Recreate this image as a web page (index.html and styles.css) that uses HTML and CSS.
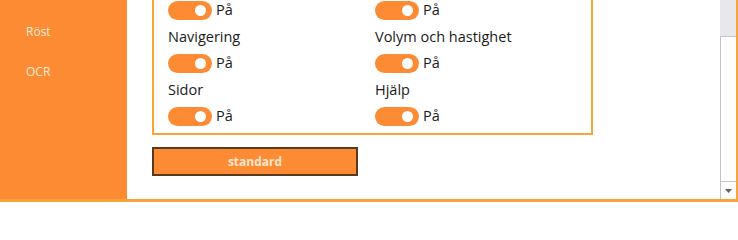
FILE: index.html
```html
<!DOCTYPE html>
<html lang="sv">
<head>
<meta charset="utf-8">
<link rel="stylesheet" href="styles.css">
</head>
<body>
<div class="app">
  <nav class="sidebar">
    <div class="nav-item">Röst</div>
    <div class="nav-item">OCR</div>
  </nav>
  <main class="main">
    <div class="viewport">
      <div class="scroller">
        <section class="box">
          <div class="item">
            <div class="toggle-row"><span class="toggle"><span class="knob"></span></span><span class="state">På</span></div>
          </div>
          <div class="item">
            <div class="toggle-row"><span class="toggle"><span class="knob"></span></span><span class="state">På</span></div>
          </div>
          <div class="item">
            <div class="label">Navigering</div>
            <div class="toggle-row"><span class="toggle"><span class="knob"></span></span><span class="state">På</span></div>
          </div>
          <div class="item">
            <div class="label">Volym och hastighet</div>
            <div class="toggle-row"><span class="toggle"><span class="knob"></span></span><span class="state">På</span></div>
          </div>
          <div class="item">
            <div class="label">Sidor</div>
            <div class="toggle-row"><span class="toggle"><span class="knob"></span></span><span class="state">På</span></div>
          </div>
          <div class="item">
            <div class="label">Hjälp</div>
            <div class="toggle-row"><span class="toggle"><span class="knob"></span></span><span class="state">På</span></div>
          </div>
        </section>
        <button class="btn" type="button">standard</button>
      </div>
    </div>
    <div class="scrollbar">
      <div class="thumb"></div>
      <div class="track"></div>
      <div class="arrow"><svg width="7" height="4" viewBox="0 0 7 4"><path d="M0 0H7L3.5 4Z" fill="#606060"/></svg></div>
    </div>
  </main>
</div>
</body>
</html>
```
FILE: styles.css
```css
html, body {
  margin: 0;
  padding: 0;
  background: #ffffff;
}
body {
  font-family: "Segoe UI", "Open Sans", "Noto Sans", sans-serif;
  width: 738px;
  height: 202px;
  overflow: hidden;
}
.app {
  display: flex;
  height: 202px;
  box-sizing: border-box;
  border-right: 2px solid #f7a43a;
  border-bottom: 3px solid #f7a43a;
}
.sidebar {
  width: 127px;
  flex: none;
  background: #fd8b33;
  box-sizing: border-box;
  padding-top: 24px;
  display: flex;
  flex-direction: column;
  gap: 24px;
}
.nav-item {
  font-family: "Segoe UI", "Open Sans", sans-serif;
  font-size: 12px;
  line-height: 16px;
  color: #fdebd8;
  padding-left: 26px;
}
.main {
  flex: 1;
  display: flex;
  min-width: 0;
}
.viewport {
  flex: 1;
  overflow: hidden;
  padding-left: 25px;
}
.scroller {
  margin-top: -9px;
}
.box {
  width: 441px;
  box-sizing: border-box;
  border: 2px solid #f7a43a;
  padding: 7px 14px 7px;
  display: grid;
  grid-template-columns: 207px 1fr;
  row-gap: 7px;
}
.item {
  display: flex;
  flex-direction: column;
  gap: 6px;
}
.label {
  font-size: 14.5px;
  line-height: 20px;
  color: #1a1a1a;
  white-space: nowrap;
}
.toggle-row {
  display: flex;
  align-items: center;
  gap: 4px;
  height: 20px;
}
.toggle {
  width: 44px;
  height: 19px;
  border-radius: 10px;
  background: #fd8b33;
  display: flex;
  align-items: center;
  justify-content: flex-end;
  padding-right: 6px;
  box-sizing: border-box;
}
.knob {
  width: 11px;
  height: 11px;
  border-radius: 50%;
  background: #ffffff;
}
.state {
  font-size: 14.5px;
  line-height: 20px;
  color: #1a1a1a;
}
.btn {
  display: block;
  margin-top: 12px;
  width: 206px;
  height: 29px;
  background: #fd8b33;
  border: 2px solid #5a3a1c;
  color: #fce6d0;
  font-family: "Segoe UI", "Open Sans", sans-serif;
  font-weight: bold;
  font-size: 12px;
  padding: 0;
  cursor: pointer;
}
.scrollbar {
  width: 16px;
  flex: none;
  display: flex;
  flex-direction: column;
}
.thumb {
  height: 36px;
  background: #e8e8ec;
}
.track {
  flex: 1;
  border-left: 1px solid #c4c4c4;
  border-top: 1px solid #c4c4c4;
  background: #ffffff;
}
.arrow {
  height: 17px;
  border-left: 1px solid #c4c4c4;
  border-top: 1px solid #c4c4c4;
  display: flex;
  align-items: center;
  justify-content: center;
  background: #ffffff;
}
```
